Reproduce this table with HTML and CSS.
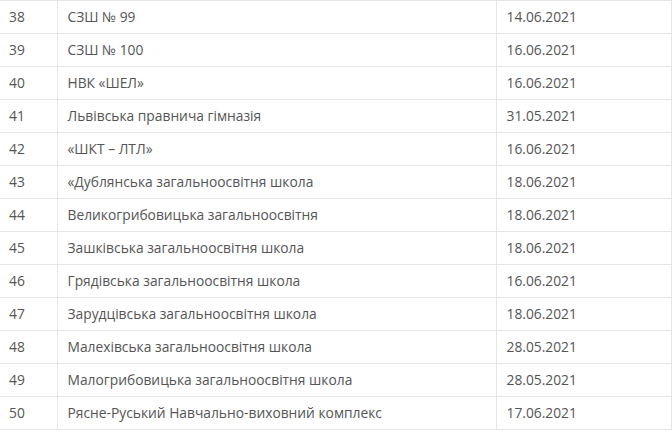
FILE: index.html
```html
<!DOCTYPE html>
<html lang="uk">
<head>
<meta charset="utf-8">
<link rel="stylesheet" href="styles.css">
</head>
<body>
<table class="list">
<colgroup><col class="c-num"><col class="c-name"><col class="c-date"></colgroup>
<tbody>
<tr><td>38</td><td>СЗШ № 99</td><td>14.06.2021</td></tr>
<tr><td>39</td><td>СЗШ № 100</td><td>16.06.2021</td></tr>
<tr><td>40</td><td>НВК «ШЕЛ»</td><td>16.06.2021</td></tr>
<tr><td>41</td><td>Львівська правнича гімназія</td><td>31.05.2021</td></tr>
<tr><td>42</td><td>«ШКТ – ЛТЛ»</td><td>16.06.2021</td></tr>
<tr><td>43</td><td>«Дублянська загальноосвітня школа</td><td>18.06.2021</td></tr>
<tr><td>44</td><td>Великогрибовицька загальноосвітня</td><td>18.06.2021</td></tr>
<tr><td>45</td><td>Зашківська загальноосвітня школа</td><td>18.06.2021</td></tr>
<tr><td>46</td><td>Грядівська загальноосвітня школа</td><td>16.06.2021</td></tr>
<tr><td>47</td><td>Зарудцівська загальноосвітня школа</td><td>18.06.2021</td></tr>
<tr><td>48</td><td>Малехівська загальноосвітня школа</td><td>28.05.2021</td></tr>
<tr><td>49</td><td>Малогрибовицька загальноосвітня школа</td><td>28.05.2021</td></tr>
<tr><td>50</td><td>Рясне-Руський Навчально-виховний комплекс</td><td>17.06.2021</td></tr>
</tbody>
</table>
</body>
</html>
```
FILE: styles.css
```css
html, body {
  margin: 0;
  padding: 0;
  background: #fff;
}
.list {
  border-collapse: collapse;
  table-layout: fixed;
  width: 671px;
  font-family: "Open Sans", "Noto Sans", sans-serif;
  font-size: 13.8px;
  color: #555;
}
.c-num { width: 57px; }
.c-name { width: 439px; }
.c-date { width: 175px; }
.list td {
  height: 32px;
  padding: 0 10px;
  border: 1px solid #e6e6e6;
  vertical-align: middle;
  white-space: nowrap;
  line-height: 18px;
}
.list td:first-child {
  border-left: none;
  padding-left: 9px;
}
```
